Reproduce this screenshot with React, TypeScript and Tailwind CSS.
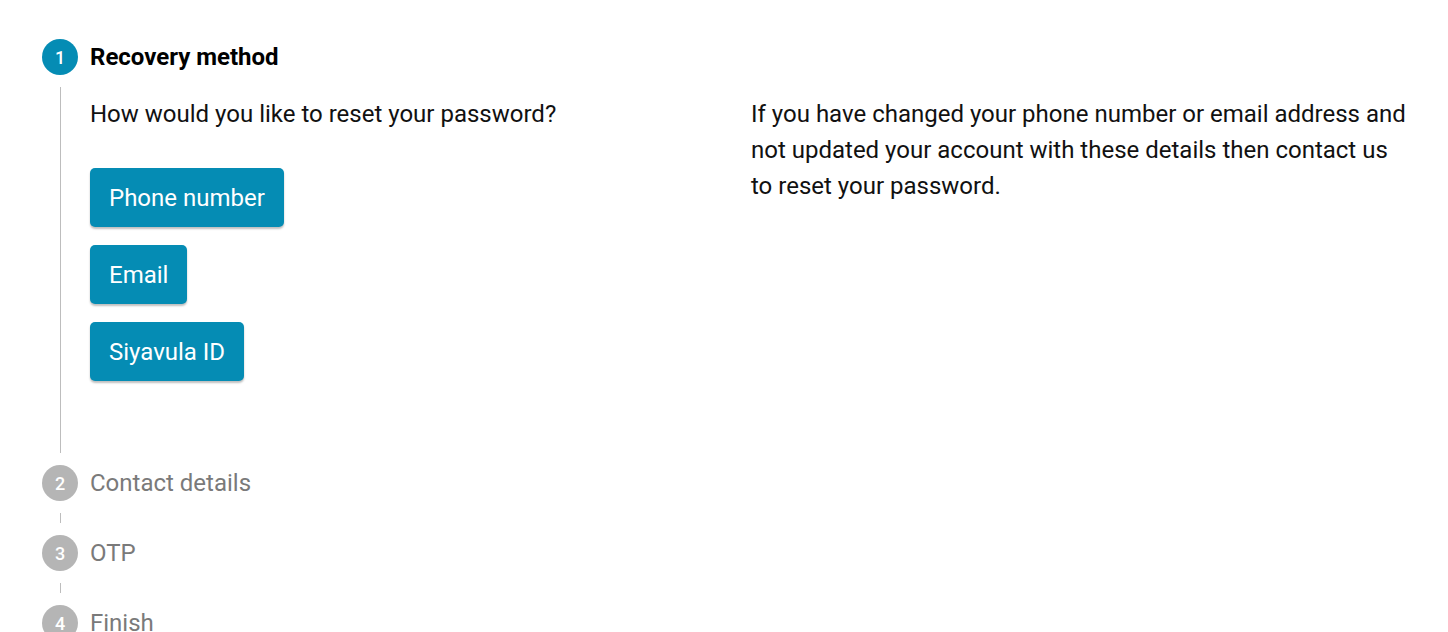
import React from 'react';

const steps = ['Recovery method', 'Contact details', 'OTP', 'Finish'];

const methods = ['Phone number', 'Email', 'Siyavula ID'];

const StepIcon = ({ n, active }: { n: number; active: boolean }) => (
  <div
    className={`flex h-9 w-9 shrink-0 items-center justify-center rounded-full text-[18px] font-medium text-white ${
      active ? 'bg-[#058cb4]' : 'bg-[#b5b5b5]'
    }`}
  >
    {n}
  </div>
);

const StepLabel = ({ n, label, active }: { n: number; label: string; active: boolean }) => (
  <div className="flex items-center gap-3">
    <StepIcon n={n} active={active} />
    <span className={`text-[24px] leading-9 ${active ? 'font-bold text-black' : 'text-[#7a7a7a]'}`}>
      {label}
    </span>
  </div>
);

const Connector = () => (
  <div className="ml-[18px] my-3 h-[10px] border-l border-[#bdbdbd]" />
);

export default function App() {
  return (
    <div
      className="min-h-screen bg-white pl-[42px] pr-[38px] pt-[39px]"
      style={{ fontFamily: 'Roboto, "Liberation Sans", sans-serif' }}
    >
      <StepLabel n={1} label={steps[0]} active />

      {/* active step content */}
      <div className="ml-[18px] my-3 border-l border-[#bdbdbd] pl-[29px] pt-[9px] pb-[72px]">
        <div className="grid grid-cols-2">
          <div>
            <p className="text-[24px] leading-9 text-[#111]">How would you like to reset your password?</p>
            <div className="mt-9 flex flex-col items-start gap-[18px]">
              {methods.map((m) => (
                <button
                  key={m}
                  className="h-[59px] rounded-[5px] bg-[#058cb4] px-[19px] text-[24px] text-white shadow-[0_2px_2px_rgba(0,0,0,0.25)]"
                >
                  {m}
                </button>
              ))}
            </div>
          </div>
          <p className="pl-px text-[24px] leading-9 text-[#111]">
            If you have changed your phone number or email address and not updated your account with these
            details then contact us to reset your password.
          </p>
        </div>
      </div>

      <StepLabel n={2} label={steps[1]} active={false} />
      <Connector />
      <StepLabel n={3} label={steps[2]} active={false} />
      <Connector />
      <StepLabel n={4} label={steps[3]} active={false} />
    </div>
  );
}
